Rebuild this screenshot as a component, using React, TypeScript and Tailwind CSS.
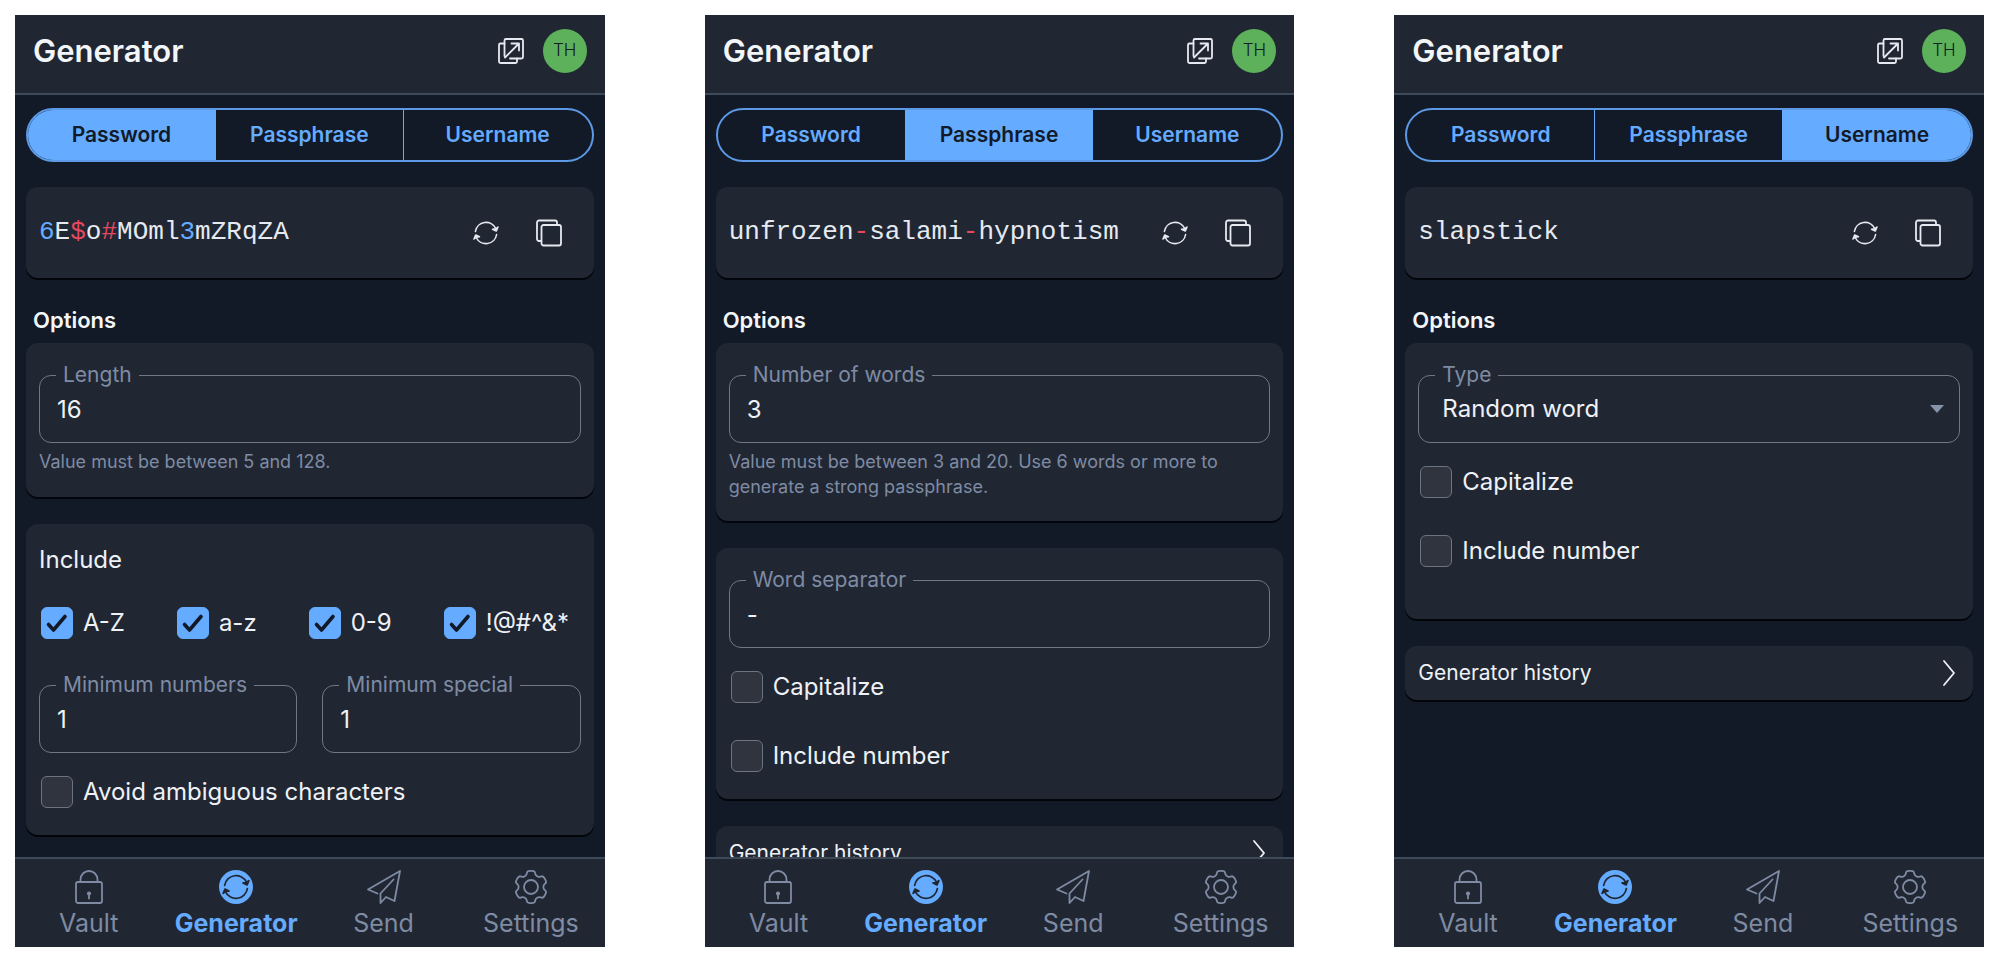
import { useId, useState, type ReactNode } from "react";

type Mode = "Password" | "Passphrase" | "Username";

const MODES: Mode[] = ["Password", "Passphrase", "Username"];

function PopoutIcon() {
  return (
    <svg viewBox="0 0 28 28" className="size-7" fill="none" stroke="currentColor" strokeWidth="1.8" strokeLinecap="round" strokeLinejoin="round" aria-hidden="true">
      <path d="M7.500 19V3.500A1.500 1.500 0 0 1 9 2H24.500A1.500 1.500 0 0 1 26 3.500V20A1.500 1.500 0 0 1 24.500 21.500H13" />
      <path d="M7.500 6.500H3.500A1.500 1.500 0 0 0 2 8V24.500A1.500 1.500 0 0 0 3.500 26H18.500A1.500 1.500 0 0 0 20 24.500V21.500" />
      <path d="M8 20.500L21.500 7M14.500 6.500H22V13.500" />
    </svg>
  );
}

function RefreshIcon({ className }: { className: string }) {
  return (
    <svg viewBox="0 0 28 28" className={className} fill="none" stroke="currentColor" strokeWidth="1.6" strokeLinecap="round" strokeLinejoin="round" aria-hidden="true">
      <path d="M3.400 12.500A10.800 10.800 0 0 1 23.800 9.500" />
      <path d="M24.600 15.500A10.800 10.800 0 0 1 4.200 18.500" />
      <path d="M26 8L24.300 12L20.600 10.200L23.800 9.800Z" fill="currentColor" />
      <path d="M2 20L3.700 16L7.400 17.800L4.200 18.200Z" fill="currentColor" />
    </svg>
  );
}

function CopyIcon() {
  return (
    <svg viewBox="0 0 28 28" className="size-7" fill="none" stroke="currentColor" strokeWidth="1.8" strokeLinejoin="round" aria-hidden="true">
      <rect x="6.500" y="6" width="19.500" height="20.500" rx="2" />
      <path d="M6 22H4A2 2 0 0 1 2 20V3.500A2 2 0 0 1 4 1.500H20A2 2 0 0 1 22 3.500V5.500" />
    </svg>
  );
}

function LockIcon() {
  return (
    <svg viewBox="0 0 34 34" className="size-[34px]" fill="none" stroke="currentColor" strokeWidth="1.8" strokeLinejoin="round" aria-hidden="true">
      <rect x="4" y="12" width="26" height="21" rx="2" />
      <path d="M8.500 12V9.500A8.500 8.500 0 0 1 25.500 9.500V12" />
      <path d="M17 24V28.500" strokeLinecap="round" />
      <circle cx="17" cy="23.500" r="1.2" fill="currentColor" />
    </svg>
  );
}

function GeneratorIcon() {
  return (
    <span className="flex size-[34px] items-center justify-center rounded-full bg-[#65abff] text-[#202733]">
      <RefreshIcon className="size-[30px]" />
    </span>
  );
}

function SendIcon() {
  return (
    <svg viewBox="0 0 34 34" className="size-[34px]" fill="none" stroke="currentColor" strokeWidth="1.8" strokeLinejoin="round" strokeLinecap="round" aria-hidden="true">
      <path d="M10.500 23.500L1 19.500L33 1L27.500 31L19 27L13.500 33V23.500L26.500 9.500" />
    </svg>
  );
}

function gearPath(cx: number, cy: number, outer: number, inner: number) {
  const points: [number, number][] = [];
  for (let tooth = 0; tooth < 6; tooth++) {
    for (const [offset, radius] of [
      [-21, inner],
      [-13, outer],
      [13, outer],
      [21, inner],
    ]) {
      const angle = ((tooth * 60 - 90 + offset) * Math.PI) / 180;
      points.push([cx + radius * Math.cos(angle), cy + radius * Math.sin(angle)]);
    }
  }
  const toward = (from: [number, number], to: [number, number], t: number) =>
    `${(from[0] + (to[0] - from[0]) * t).toFixed(2)} ${(from[1] + (to[1] - from[1]) * t).toFixed(2)}`;
  return (
    points
      .map((point, i) => {
        const previous = points[(i + points.length - 1) % points.length];
        const next = points[(i + 1) % points.length];
        return `${i ? "L" : "M"}${toward(point, previous, 0.4)}Q${point[0].toFixed(2)} ${point[1].toFixed(2)} ${toward(point, next, 0.4)}`;
      })
      .join("") + "Z"
  );
}

const GEAR = gearPath(17, 17, 16.5, 12.6);

function SettingsIcon() {
  return (
    <svg viewBox="0 0 34 34" className="size-[34px]" fill="none" stroke="currentColor" strokeWidth="1.8" strokeLinejoin="round" aria-hidden="true">
      <circle cx="17" cy="17" r="7" />
      <path d={GEAR} />
    </svg>
  );
}

function Card({ children, className }: { children: ReactNode; className: string }) {
  return <div className={"rounded-xl bg-[#202733] px-[13px] shadow-[0_2px_0_#020509] " + className}>{children}</div>;
}

function Field({ label, type, value }: { label: string; type: string; value: string }) {
  const id = useId();
  return (
    <fieldset className="min-w-0 rounded-xl border border-[#717783] pb-[13px]">
      <legend className="ml-[16px] px-[7px] text-[21px] leading-7 text-[#7f8ba3]">
        <label htmlFor={id}>{label}</label>
      </legend>
      <input
        id={id}
        type={type}
        defaultValue={value}
        className="block h-10 w-full [appearance:textfield] bg-transparent px-[17px] text-[24px] text-[#eef1f6] outline-none"
      />
    </fieldset>
  );
}

function SelectField({ label, options }: { label: string; options: string[] }) {
  const id = useId();
  return (
    <fieldset className="min-w-0 rounded-xl border border-[#717783] pb-[13px]">
      <legend className="ml-[16px] px-[7px] text-[21px] leading-7 text-[#7f8ba3]">
        <label htmlFor={id}>{label}</label>
      </legend>
      <div className="grid items-center">
        <select
          id={id}
          className="col-start-1 row-start-1 h-10 w-full appearance-none bg-transparent px-[23px] text-[24px] text-[#eef1f6] outline-none"
        >
          {options.map((option) => (
            <option key={option}>{option}</option>
          ))}
        </select>
        <svg viewBox="0 0 14 8" className="pointer-events-none col-start-1 row-start-1 mr-[15px] h-2 w-[14px] justify-self-end text-[#8793ab]" aria-hidden="true">
          <path d="M0 0H14L7 8Z" fill="currentColor" />
        </svg>
      </div>
    </fieldset>
  );
}

function Check({ label, checked = false }: { label: string; checked?: boolean }) {
  return (
    <label className="flex h-8 items-center gap-[10px] text-[24px] text-[#eef1f6]">
      <span className="grid">
        <input
          type="checkbox"
          defaultChecked={checked}
          className="peer col-start-1 row-start-1 size-8 appearance-none rounded-md border border-[#6c7481] bg-[#30343f] checked:border-[#65abff] checked:bg-[#65abff]"
        />
        <svg viewBox="0 0 32 32" className="pointer-events-none invisible col-start-1 row-start-1 size-8 text-[#121a27] peer-checked:visible" fill="none" stroke="currentColor" strokeWidth="3.6" strokeLinecap="round" strokeLinejoin="round" aria-hidden="true">
          <path d="M7.500 17.500L12.500 23L24 9.500" />
        </svg>
      </span>
      {label}
    </label>
  );
}

function Help({ children }: { children: ReactNode }) {
  return <p className="mt-[6px] text-[18px] leading-[25px] text-[#7f8ba3]">{children}</p>;
}

function HistoryRow() {
  return (
    <button type="button" className="flex h-[54px] w-full shrink-0 items-center justify-between rounded-xl bg-[#202733] pr-4 pl-[13px] text-[21px] text-[#eef1f6] shadow-[0_2px_0_#020509]">
      Generator history
      <svg viewBox="0 0 16 28" className="h-7 w-4" fill="none" stroke="currentColor" strokeWidth="1.8" strokeLinecap="round" strokeLinejoin="round" aria-hidden="true">
        <path d="M3 2L13 14L3 26" />
      </svg>
    </button>
  );
}

function tone(char: string) {
  if (/[0-9]/.test(char)) return "text-[#65abff]";
  if (/[A-Za-z]/.test(char)) return "text-[#e6eaf0]";
  return "text-[#e5485f]";
}

function Result({ value }: { value: string }) {
  return (
    <Card className="flex h-[91px] shrink-0 items-center justify-between">
      <output className="font-['Liberation_Mono',monospace] text-[26px]">
        {value.split("").map((char, index) => (
          <span key={index} className={tone(char)}>
            {char}
          </span>
        ))}
      </output>
      <div className="flex items-center gap-[35px] pr-[18px] text-[#e6eaf0]">
        <button type="button" aria-label="Regenerate">
          <RefreshIcon className="size-7" />
        </button>
        <button type="button" aria-label="Copy">
          <CopyIcon />
        </button>
      </div>
    </Card>
  );
}

function Tabs({ mode, onChange }: { mode: Mode; onChange: (mode: Mode) => void }) {
  return (
    <div className="grid h-[54px] shrink-0 grid-cols-3 divide-x divide-[#65abff] overflow-hidden rounded-full border-2 border-[#5c9ae6] text-[21px] font-semibold">
      {MODES.map((item) => (
        <button
          key={item}
          type="button"
          aria-pressed={item === mode}
          onClick={() => onChange(item)}
          className={item === mode ? "bg-[#65abff] text-[#121a27]" : "text-[#65abff]"}
        >
          {item}
        </button>
      ))}
    </div>
  );
}

function PasswordOptions() {
  return (
    <div className="flex flex-col gap-[27px]">
      <Card className="pt-[18px] pb-[23px]">
        <Field label="Length" type="number" value="16" />
        <Help>Value must be between 5 and 128.</Help>
      </Card>
      <Card className="pt-[20px] pb-[27px]">
        <h3 className="text-[24px] leading-8 text-[#eef1f6]">Include</h3>
        <div className="mt-[31px] flex gap-[52px] px-[2px] whitespace-nowrap">
          <Check label="A-Z" checked />
          <Check label="a-z" checked />
          <Check label="0-9" checked />
          <Check label="!@#^&*" checked />
        </div>
        <div className="mt-8 mb-[23px] grid grid-cols-2 gap-[25px]">
          <Field label="Minimum numbers" type="number" value="1" />
          <Field label="Minimum special" type="number" value="1" />
        </div>
        <div className="px-[2px]">
          <Check label="Avoid ambiguous characters" />
        </div>
      </Card>
    </div>
  );
}

function WordChecks() {
  return (
    <div className="mt-[23px] flex flex-col gap-[37px] px-[2px]">
      <Check label="Capitalize" />
      <Check label="Include number" />
    </div>
  );
}

function PassphraseOptions() {
  return (
    <div className="flex flex-col gap-[27px]">
      <Card className="pt-[18px] pb-[22px]">
        <Field label="Number of words" type="number" value="3" />
        <Help>Value must be between 3 and 20. Use 6 words or more to generate a strong passphrase.</Help>
      </Card>
      <Card className="pt-[18px] pb-[27px]">
        <Field label="Word separator" type="text" value="-" />
        <WordChecks />
      </Card>
      <HistoryRow />
    </div>
  );
}

function UsernameOptions() {
  return (
    <div className="flex flex-col gap-[27px]">
      <Card className="pt-[18px] pb-[52px]">
        <SelectField label="Type" options={["Random word", "Plus addressed email", "Catch-all email"]} />
        <WordChecks />
      </Card>
      <HistoryRow />
    </div>
  );
}

const SAMPLES: Record<Mode, string> = {
  Password: "6E$o#MOml3mZRqZA",
  Passphrase: "unfrozen-salami-hypnotism",
  Username: "slapstick",
};

function NavItem({ label, icon, active = false }: { label: string; icon: ReactNode; active?: boolean }) {
  return (
    <a
      href="#"
      aria-current={active ? "page" : undefined}
      className={
        "flex flex-col items-center gap-[3px] pt-[11px] text-[25px] leading-8 " +
        (active ? "font-bold text-[#65abff]" : "text-[#7f8ba3]")
      }
    >
      {icon}
      {label}
    </a>
  );
}

function Popup({ initial }: { initial: Mode }) {
  const [mode, setMode] = useState<Mode>(initial);
  return (
    <section className="flex min-h-0 min-w-0 flex-col overflow-hidden bg-[#121a27]">
      <header className="flex h-20 shrink-0 items-center justify-between border-b-2 border-[#3f4a59] bg-[#202733] px-[18px] pb-[6px]">
        <h1 className="text-[31px] font-semibold text-[#f3f6f9]">Generator</h1>
        <div className="flex items-center gap-[18px]">
          <button type="button" aria-label="Open in a new window" className="text-[#e6eaf0]">
            <PopoutIcon />
          </button>
          <button type="button" className="size-11 rounded-full bg-[#5cb15a] text-[17px] font-light text-[#121a27]">
            TH
          </button>
        </div>
      </header>
      <main className="flex min-h-0 flex-1 flex-col overflow-y-auto px-[11px] pt-[13px] [scrollbar-width:none]">
        <Tabs mode={mode} onChange={setMode} />
        <div className="mt-[25px] flex flex-col">
          <Result value={SAMPLES[mode]} />
        </div>
        <h2 className="mt-[26px] mb-[7px] px-[7px] text-[22px] leading-8 font-semibold text-[#f3f6f9]">Options</h2>
        {mode === "Password" && <PasswordOptions />}
        {mode === "Passphrase" && <PassphraseOptions />}
        {mode === "Username" && <UsernameOptions />}
      </main>
      <nav className="grid h-[90px] shrink-0 grid-cols-4 border-t-2 border-[#3f4a59] bg-[#202733]">
        <NavItem label="Vault" icon={<LockIcon />} />
        <NavItem label="Generator" icon={<GeneratorIcon />} active />
        <NavItem label="Send" icon={<SendIcon />} />
        <NavItem label="Settings" icon={<SettingsIcon />} />
      </nav>
    </section>
  );
}

export default function App() {
  return (
    <div className="grid h-screen grid-cols-3 grid-rows-1 gap-[100px] bg-white p-[15px] font-[Inter,'Liberation_Sans',sans-serif]">
      {MODES.map((mode) => (
        <Popup key={mode} initial={mode} />
      ))}
    </div>
  );
}
